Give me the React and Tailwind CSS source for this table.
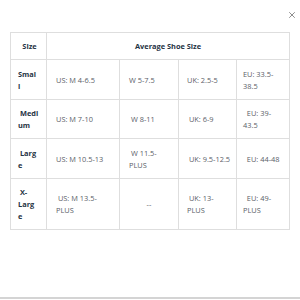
import { X } from 'lucide-react'

const rows = [
  {
    size: ['Smal', 'l'],
    cells: [['US: M 4-6.5'], ['W 5-7.5'], ['UK: 2.5-5'], ['EU: 33.5-', '38.5']],
    h: 'h-[40px]',
  },
  {
    size: ['\u00a0Medi', 'um'],
    cells: [['US: M 7-10'], ['\u00a0W 8-11'], ['\u00a0UK: 6-9'], ['\u00a0\u00a0EU: 39-', '43.5']],
    h: 'h-[39px]',
  },
  {
    size: ['\u00a0Larg', 'e'],
    cells: [['US: M 10.5-13'], ['\u00a0W 11.5-', 'PLUS'], ['\u00a0UK: 9.5-12.5'], ['\u00a0\u00a0EU: 44-48']],
    h: 'h-[40px]',
  },
  {
    size: ['\u00a0X-', 'Larg', 'e'],
    cells: [['\u00a0US: M 13.5-', 'PLUS'], null, ['\u00a0UK: 13-', 'PLUS'], ['\u00a0\u00a0EU: 49-', 'PLUS']],
    h: 'h-[51px]',
  },
]

const padCols = ['pl-[9px]', 'pl-[9px]', 'pl-[8px]', 'pl-[6px]']

export default function App() {
  return (
    <div
      className="w-[300px] h-[299px] bg-white border-b-2 border-[#d4d4d4] flex flex-col"
      style={{ fontFamily: '"Open Sans", "Liberation Sans", sans-serif' }}
    >
      <div className="flex justify-end pt-[10px] pr-[3px] h-[32px]">
        <X className="w-[10px] h-[10px] text-[#555]" strokeWidth={1.6} />
      </div>
      <div className="pl-[10px]">
        <table className="table-fixed border-collapse w-[279px] text-[7.4px] leading-[12px] text-[#5a6068]">
          <colgroup>
            <col className="w-[36px]" />
            <col className="w-[73px]" />
            <col className="w-[59px]" />
            <col className="w-[58px]" />
            <col className="w-[53px]" />
          </colgroup>
          <tbody>
            <tr className="h-[27px]">
              <td className="border border-[#dedede] text-center font-bold text-[#1f3344] pl-[2px]">Size</td>
              <td colSpan={4} className="border border-[#dedede] text-center font-bold text-[#1f3344]">
                Average Shoe Size
              </td>
            </tr>
            {rows.map((r, i) => (
              <tr key={i} className={r.h}>
                <td className="border border-[#dedede] pl-[7px] font-bold text-[#1f3344] align-middle">
                  {r.size.map((s, j) => (
                    <div key={j}>{s}</div>
                  ))}
                </td>
                {r.cells.map((c, j) =>
                  c ? (
                    <td key={j} className={`border border-[#dedede] align-middle ${padCols[j]}`}>
                      {c.map((s, k) => (
                        <div key={k}>{s}</div>
                      ))}
                    </td>
                  ) : (
                    <td key={j} className="border border-[#dedede] align-middle text-center">
                      --
                    </td>
                  )
                )}
              </tr>
            ))}
          </tbody>
        </table>
      </div>
    </div>
  )
}
